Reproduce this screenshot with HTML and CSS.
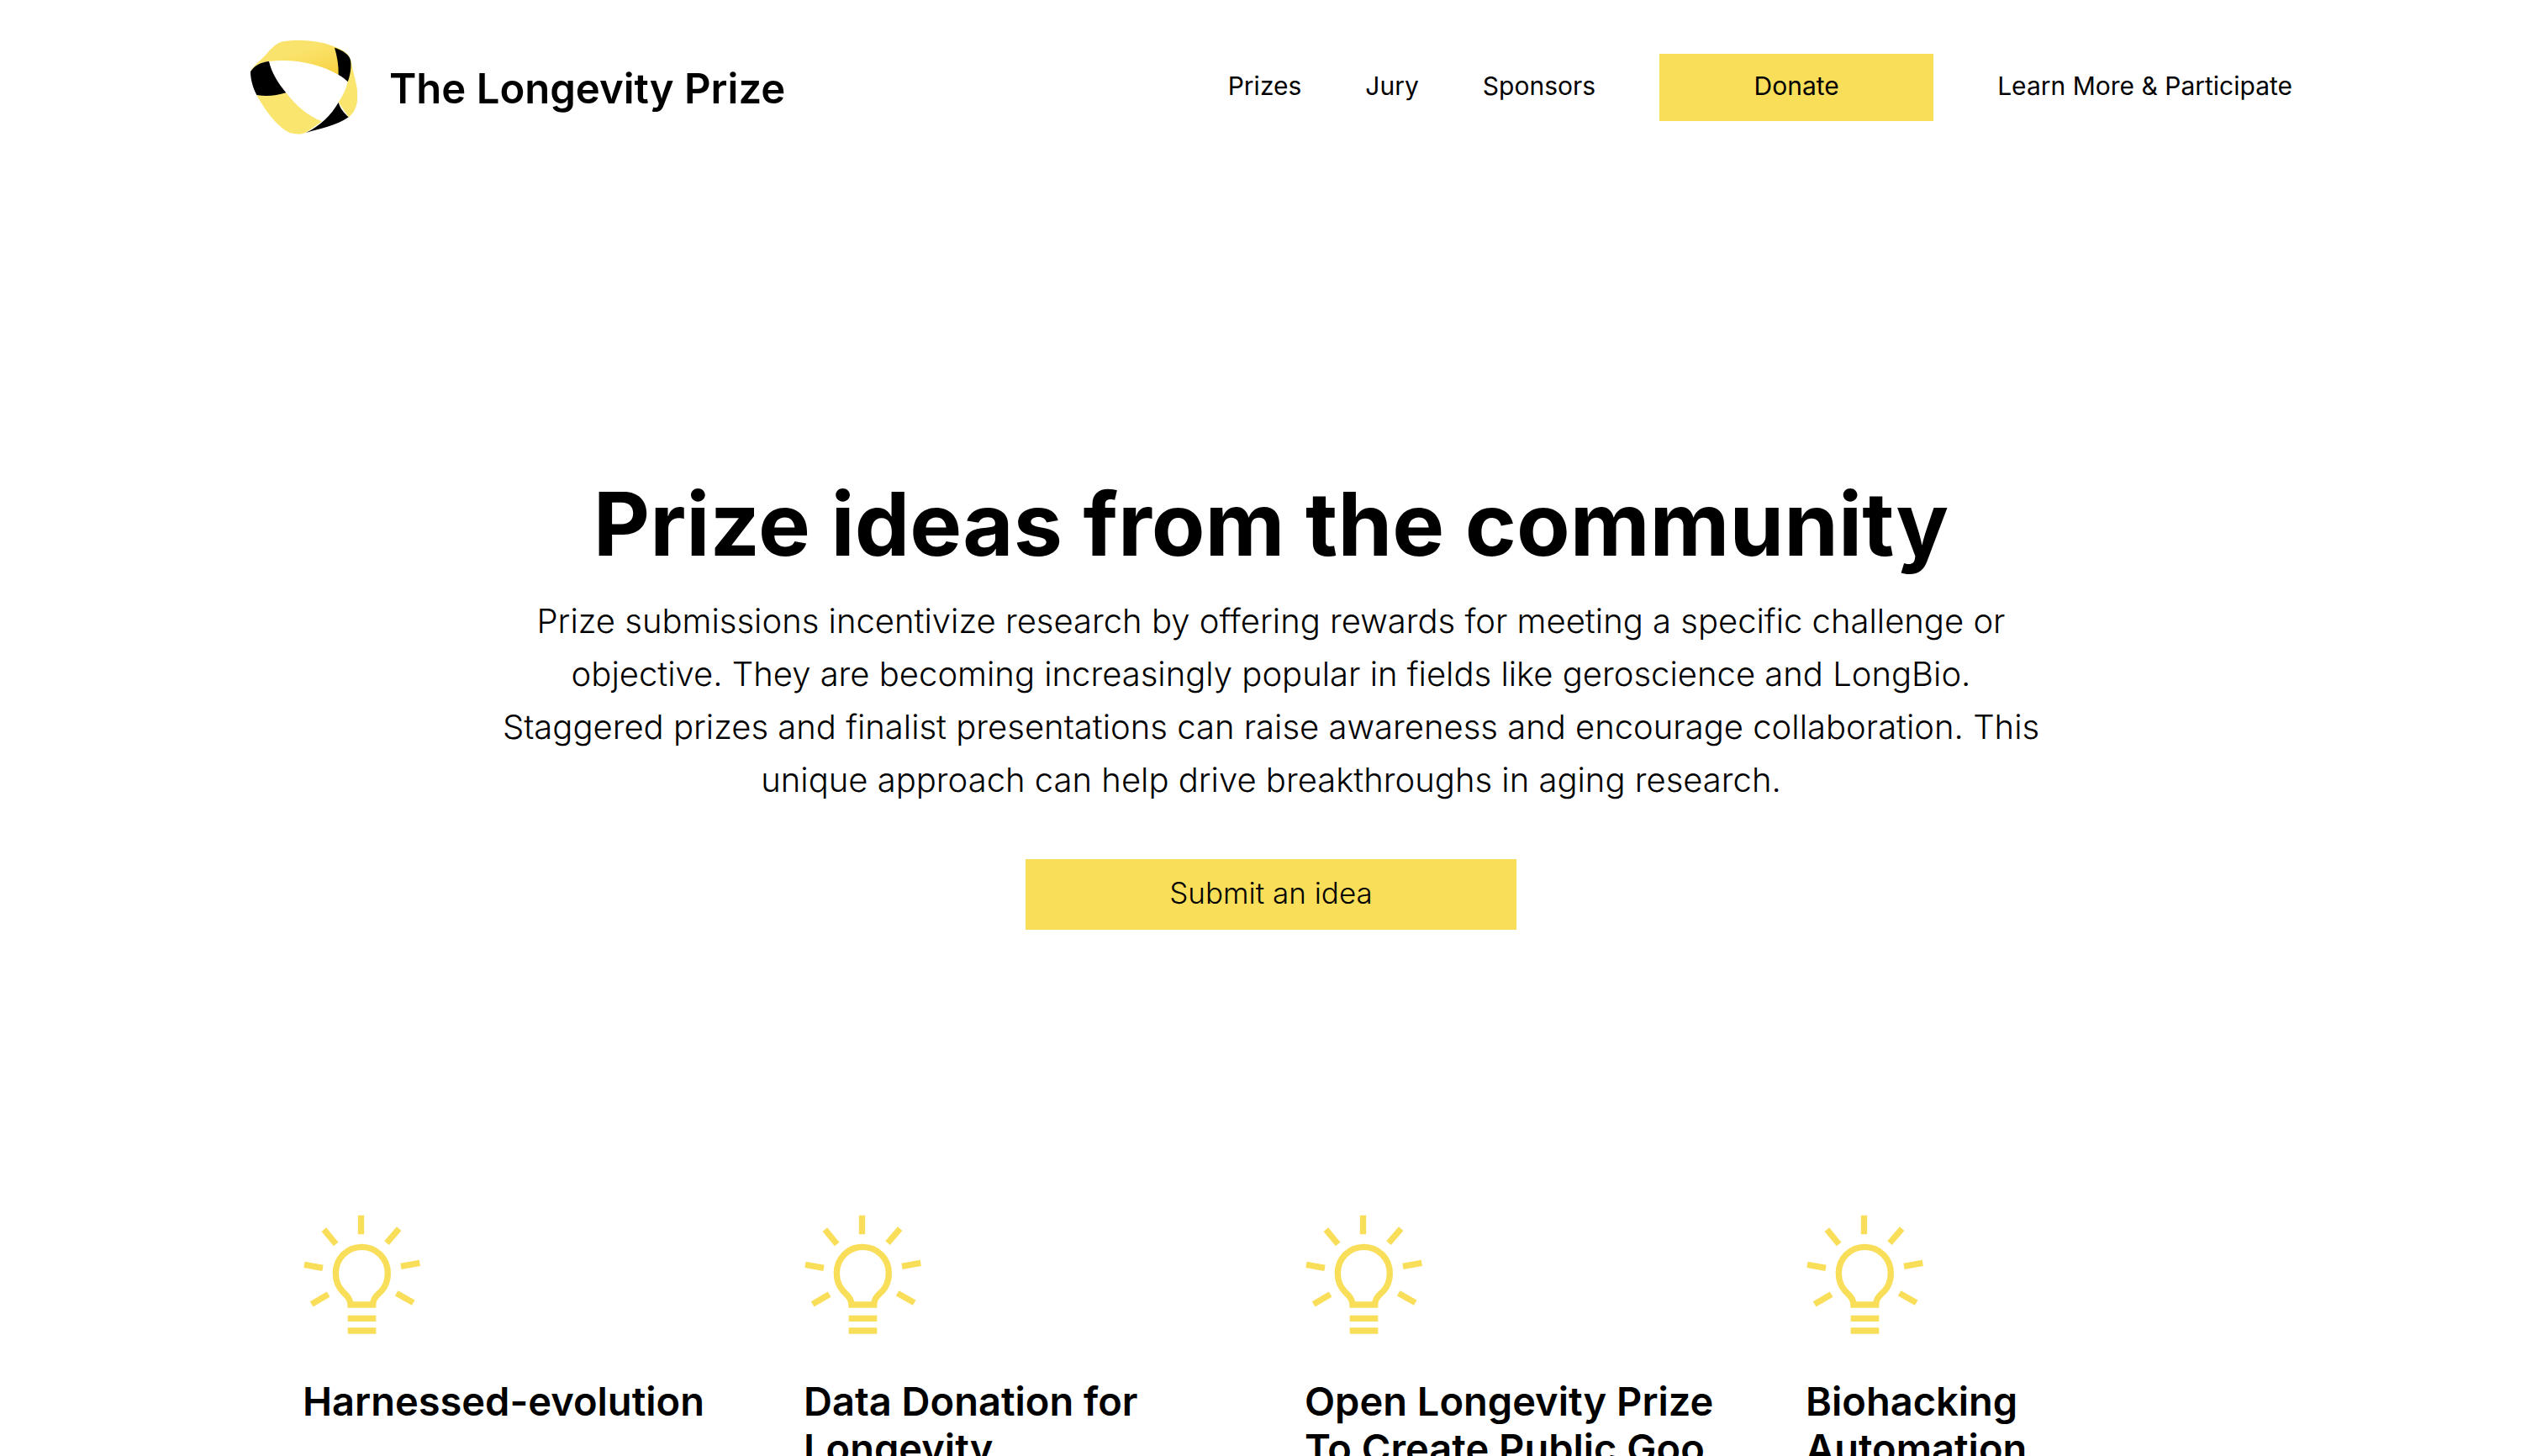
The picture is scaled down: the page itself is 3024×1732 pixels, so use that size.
FILE: index.html
```html
<!DOCTYPE html>
<html lang="en">
<head>
<meta charset="utf-8">
<meta name="viewport" content="width=device-width, initial-scale=1">
<title>The Longevity Prize</title>
<link rel="stylesheet" href="styles.css">
</head>
<body>
<svg class="sprite" aria-hidden="true">
  <symbol id="bulb" viewBox="60 42 432 432">
    <g fill="none" stroke="currentColor" stroke-width="22">
      <path d="M268.500 47V115M136 98L179 150M404 95L360 146M66 223L132 235M411 229L478 217M92 364L152 329M395 325L455 359M221 415H322M221 459H322"/>
      <path d="M231 366H311C311 349 319 337 332 326C352 309 364 283 364 254C364 201 323 160 271 160C219 160 178 201 178 254C178 283 190 308 210 326C223 338 231 349 231 366Z"/>
    </g>
  </symbol>
</svg>
<header class="header">
  <a class="brand" href="#">
    <svg class="brand-mark" viewBox="51 51 384 342" aria-hidden="true">
      <defs>
        <linearGradient id="band" x1="0" y1="0" x2="1" y2="1">
          <stop offset="0.4" stop-color="#fae36c"/>
          <stop offset="1" stop-color="#f7d03c"/>
        </linearGradient>
      </defs>
      <path fill="#fae56e" d="M76 249C110 255 146 248 181 241C216 287 260 325 309 343L252 383C232 391 208 390 190 382C145 358 103 299 76 249ZM412 121C418 165 436 210 436 252C436 286 425 313 404 328L368 275C385 249 396 226 401 202Z"/>
      <path fill="url(#band)" d="M54 166C58 152 76 138 97 117C123 91 138 67 165 59C205 50 296 53 340 72C372 82 402 96 410 119L368 177C296 135 205 119 120 129C91 133 67 145 54 166Z"/>
      <path d="M54 166C66 146 89 132 120 129C129 169 153 208 181 241C145 252 111 255 76 249C63 225 54 194 54 166ZM354 80C383 90 407 104 411 125C415 151 409 181 401 202C392 192 380 184 368 177C369 144 363 110 354 80ZM368 275C374 299 390 314 404 328C362 358 302 369 252 384C302 358 341 323 368 275Z"/>
    </svg>
    <span class="brand-name">The Longevity Prize</span>
  </a>
  <nav class="nav" aria-label="Main">
    <a href="#">Prizes</a>
    <a href="#">Jury</a>
    <a href="#">Sponsors</a>
    <a class="donate" href="#">Donate</a>
    <a href="#">Learn More &amp; Participate</a>
  </nav>
</header>
<main>
  <section class="hero">
    <h1>Prize ideas from the community</h1>
    <p>Prize submissions incentivize research by offering rewards for meeting a specific challenge or<br>objective. They are becoming increasingly popular in fields like geroscience and LongBio.<br>Staggered prizes and finalist presentations can raise awareness and encourage collaboration. This<br>unique approach can help drive breakthroughs in aging research.</p>
    <button class="submit" type="button">Submit an idea</button>
  </section>
  <section class="ideas" aria-label="Prize ideas">
    <article class="idea">
      <svg class="bulb" aria-hidden="true"><use href="#bulb"/></svg>
      <h2>Harnessed-evolution</h2>
    </article>
    <article class="idea">
      <svg class="bulb" aria-hidden="true"><use href="#bulb"/></svg>
      <h2>Data Donation for Longevity</h2>
    </article>
    <article class="idea">
      <svg class="bulb" aria-hidden="true"><use href="#bulb"/></svg>
      <h2>Open Longevity Prize To Create Public Goo</h2>
    </article>
    <article class="idea">
      <svg class="bulb" aria-hidden="true"><use href="#bulb"/></svg>
      <h2>Biohacking Automation</h2>
    </article>
  </section>
</main>
</body>
</html>
```
FILE: styles.css
```css
* {
  box-sizing: border-box;
}

body {
  margin: 0;
  background: #fff;
  color: #000;
  font-family: Inter, "Liberation Sans", sans-serif;
}

a {
  color: inherit;
  text-decoration: none;
}

.sprite {
  display: none;
}

.header {
  display: flex;
  align-items: center;
  justify-content: space-between;
  max-width: 2430px;
  min-height: 208px;
  margin: 0 auto;
}

.brand {
  display: flex;
  align-items: center;
  gap: 38px;
}

.brand-mark {
  width: 128px;
  height: 114px;
}

.brand-name {
  padding-top: 4px;
  font-size: 49px;
  font-weight: 600;
  line-height: 56px;
}

.nav {
  display: flex;
  align-items: center;
  gap: 76px;
  font-size: 30px;
  line-height: 40px;
}

.nav a {
  padding: 18px 0 22px;
}

.nav .donate {
  width: 326px;
  background: #f9de5a;
  text-align: center;
}

.hero {
  display: flex;
  flex-direction: column;
  align-items: center;
  padding: 352px 40px 0;
  text-align: center;
}

.hero h1 {
  margin: 0;
  font-size: 104px;
  font-weight: 700;
  line-height: 126px;
}

.hero p {
  margin: 21px 0 63px;
  font-size: 40px;
  font-weight: 300;
  line-height: 63px;
}

.submit {
  width: 584px;
  padding: 18px 20px 22px;
  border: 0;
  background: #f9de5a;
  color: inherit;
  font: inherit;
  font-size: 35px;
  font-weight: 300;
  line-height: 44px;
}

.ideas {
  display: grid;
  grid-template-columns: repeat(4, minmax(0, 1fr));
  gap: 80px;
  max-width: 2304px;
  margin: 338px auto 0;
}

.bulb {
  display: block;
  width: 144px;
  height: 144px;
  color: #f9de5a;
}

.idea h2 {
  margin: 51px 0 0;
  font-size: 47px;
  font-weight: 600;
  line-height: 56px;
}
```
